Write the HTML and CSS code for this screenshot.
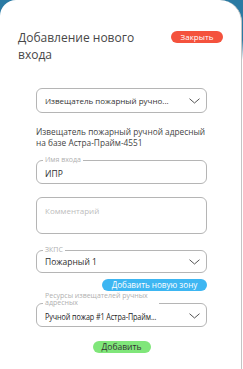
FILE: index.html
```html
<!DOCTYPE html>
<html lang="ru">
<head>
<meta charset="utf-8">
<link rel="stylesheet" href="styles.css">
</head>
<body>
<div class="card">
  <div class="header">
    <h1 class="title">Добавление нового входа</h1>
    <button class="btn btn-close">Закрыть</button>
  </div>
  <div class="form">
    <div class="field select sel-type">
      <span class="value">Извещатель пожарный ручно...</span>
      <svg class="chev" width="11" height="6" viewBox="0 0 11 6"><path d="M0.5 0.7 L5.5 5 L10.5 0.7" fill="none" stroke="#555" stroke-width="1"/></svg>
    </div>
    <p class="desc">Извещатель пожарный ручной адресный на базе Астра-Прайм-4551</p>
    <div class="field input f-name">
      <span class="label">Имя входа</span>
      <span class="value val-lg">ИПР</span>
    </div>
    <div class="field textarea f-comment">
      <span class="placeholder">Комментарий</span>
    </div>
    <div class="field select f-zone">
      <span class="label">ЗКПС</span>
      <span class="value val-lg">Пожарный 1</span>
      <svg class="chev" width="11" height="6" viewBox="0 0 11 6"><path d="M0.5 0.7 L5.5 5 L10.5 0.7" fill="none" stroke="#555" stroke-width="1"/></svg>
    </div>
    <div class="row-right">
      <button class="btn btn-zone">Добавить новую зону</button>
    </div>
    <div class="field select f-res">
      <span class="label label-wrap">Ресурсы извещателей ручных адресных</span>
      <span class="value dark">Ручной пожар #1 Астра-Прайм...</span>
      <svg class="chev" width="11" height="6" viewBox="0 0 11 6"><path d="M0.5 0.7 L5.5 5 L10.5 0.7" fill="none" stroke="#555" stroke-width="1"/></svg>
    </div>
    <div class="row-center">
      <button class="btn btn-add">Добавить</button>
    </div>
  </div>
</div>
</body>
</html>
```
FILE: styles.css
```css
html, body {
  margin: 0;
  padding: 0;
}
body {
  width: 243px;
  height: 369px;
  overflow: hidden;
  background: linear-gradient(#2a7aa3 0, #2a7aa3 40px, #ffffff 60px);
  font-family: "Open Sans", "Noto Sans", sans-serif;
}
.card {
  box-sizing: border-box;
  width: 242px;
  height: 369px;
  background: #fff;
  border-radius: 16px 22px 0 0;
  border-right: 1px solid #c4c4c4;
}
.header {
  display: flex;
  justify-content: space-between;
  align-items: flex-start;
  padding: 29px 18px 0 18px;
}
.title {
  margin: 0;
  width: 125px;
  font-size: 12px;
  line-height: 17px;
  font-weight: 400;
  color: #474747;
}
.btn {
  border: none;
  font-family: "Open Sans", "Noto Sans", sans-serif;
  border-radius: 7px;
  padding: 0;
  cursor: pointer;
}
.btn-close {
  margin-top: 2px;
  width: 52px;
  height: 12px;
  background: #f4523d;
  color: #fff;
  font-size: 8px;
  line-height: 12px;
}
.form {
  margin: 25px 0 0 36px;
  width: 171px;
  display: flex;
  flex-direction: column;
}
.field {
  position: relative;
  box-sizing: border-box;
  border: 1px solid #b5b5b5;
  border-radius: 6px;
  display: flex;
  align-items: center;
  padding: 0 6px 0 8px;
  font-size: 8px;
  color: #333;
}
.select .value {
  flex: 1;
  white-space: nowrap;
  overflow: hidden;
}
.val-lg {
  font-size: 8.5px;
  color: #2e2e2e;
}
.chev {
  flex: none;
  margin-left: 4px;
}
.sel-type {
  height: 25px;
}
.desc {
  margin: 13px 0 0 0;
  font-size: 8.3px;
  line-height: 11px;
  color: #444;
}
.label {
  position: absolute;
  left: 6px;
  top: -5px;
  padding: 0 2px;
  background: #fff;
  font-size: 7px;
  line-height: 8px;
  color: #b0b0b0;
}
.f-name {
  margin-top: 12px;
  height: 24px;
  padding-top: 2px;
}
.f-comment {
  margin-top: 13px;
  height: 37px;
  align-items: flex-start;
  padding-top: 7px;
}
.placeholder {
  color: #bdbdbd;
  font-size: 8px;
}
.f-zone {
  margin-top: 16px;
  height: 23px;
}
.row-right {
  display: flex;
  justify-content: flex-end;
  margin-top: 6px;
}
.btn-zone {
  width: 105px;
  height: 12px;
  background: #3db6f2;
  color: #fff;
  font-size: 8.1px;
  line-height: 12px;
}
.f-res {
  margin-top: 12px;
  height: 24px;
  padding-top: 2px;
}
.label-wrap {
  width: 112px;
  top: -12px;
  line-height: 7px;
  font-size: 7px;
}
.dark {
  color: #222;
  font-size: 8.2px;
  letter-spacing: -0.1px;
  transform: scaleX(0.88);
  transform-origin: left center;
}
.row-center {
  display: flex;
  justify-content: center;
  margin-top: 14px;
}
.btn-add {
  width: 58px;
  height: 12px;
  background: #80e67a;
  color: #333;
  font-size: 8.5px;
  line-height: 12px;
}
```
